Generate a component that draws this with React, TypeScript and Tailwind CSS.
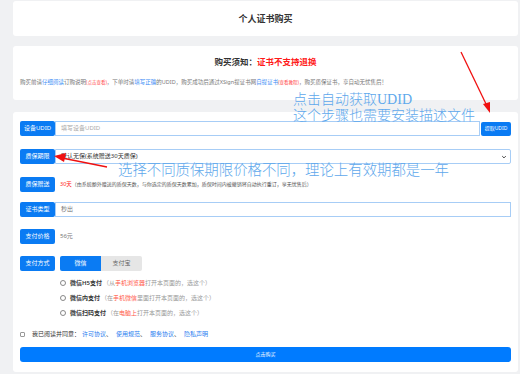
import React from "react"

const font = { fontFamily: '"Noto Sans", "Noto Sans CJK SC", sans-serif' }

function Label({ children }: { children: React.ReactNode }) {
  return (
    <div className="w-[35px] h-[15px] shrink-0 rounded-[2px] bg-[#0a7bf3] text-white text-[6px] flex items-center justify-center">
      {children}
    </div>
  )
}

function Radio({ title, pre, red, post }: { title: string; pre: string; red: string; post: string }) {
  return (
    <div className="flex items-center h-[14px] text-[6px]">
      <span className="w-[6px] h-[6px] rounded-full border border-[#888] bg-white mr-[4px]" />
      <span className="text-[#333] font-semibold">{title}</span>
      <span className="text-[#999] ml-[1px]">
        （{pre}
        <span className="text-[#ff5a4a]">{red}</span>
        {post}）
      </span>
    </div>
  )
}

export default function App() {
  return (
    <div className="relative w-[520px] h-[374px] overflow-hidden bg-[#f0f1f3] pl-[13px] pr-[2px] pt-[1px]" style={font}>
      {/* title card */}
      <div className="h-[35px] bg-white rounded-[3px] flex items-center justify-center">
        <span className="text-[9px] font-bold text-[#333]">个人证书购买</span>
      </div>

      {/* notice card */}
      <div className="mt-[10px] h-[54px] bg-white rounded-[3px] px-[7px] pt-[10px]">
        <div className="text-center text-[8.5px] font-bold text-[#333] leading-[12px]">
          购买须知：<span className="text-[#ff1a1a]">证书不支持退换</span>
        </div>
        <div className="mt-[10px] text-[5.5px] text-[#777] whitespace-nowrap leading-[8px]">
          购买前请<span className="text-[#3b8cf5]">仔细阅读</span>订购说明
          <span className="text-[#ff4a4a] text-[4.5px]">(点击查看)</span>，下单时请
          <span className="text-[#3b8cf5]">填写正确</span>的UDID，购买成功后通过XSign提证书网
          <span className="text-[#3b8cf5]">自提证书</span>
          <span className="text-[#ff4a4a] text-[4.5px]">(查看教程)</span>，购买质保证书，享自动无忧售后！
        </div>
      </div>

      {/* form card */}
      <div className="mt-[12px] h-[260px] bg-white rounded-[3px] px-[7px] pt-[9px]">
        <div className="flex flex-col gap-[12px]">
          {/* UDID */}
          <div className="flex items-center h-[15px]">
            <Label>设备UDID</Label>
            <div className="flex-1 h-[15px] border border-[#a7cdf6] flex items-center pl-[5px] text-[6px] text-[#aaa]">
              填写设备UDID
            </div>
            <div className="ml-[1px] w-[30px] h-[14px] rounded-[2px] bg-[#0a7bf3] text-white text-[5px] flex items-center justify-center">
              提取UDID
            </div>
          </div>

          {/* warranty select */}
          <div className="flex items-center h-[15px] mt-[1px]">
            <Label>质保期限</Label>
            <div className="flex-1 h-[15px] border border-[#a7cdf6] rounded-r-[2px] flex items-center justify-between pl-[5px] pr-[3px] text-[6px] text-[#333]">
              <span>默认无保(系统赠送30天质保)</span>
              <svg width="6" height="6" viewBox="0 0 10 10">
                <path d="M2 3.5 L5 6.5 L8 3.5" fill="none" stroke="#333" strokeWidth="1.5" />
              </svg>
            </div>
          </div>

          {/* bonus */}
          <div className="flex items-center h-[15px] mt-[1px]">
            <Label>质保赠送</Label>
            <span className="ml-[5px] text-[5.5px] text-[#ff2020]">30天</span>
            <span className="text-[5px] text-[#555]">
              （由系统额外赠送的质保天数，与你选定的质保天数累加，质保时间内被撤销将自动执行重订，享无忧售后）
            </span>
          </div>

          {/* type */}
          <div className="flex items-center h-[15px] -mt-[2px]">
            <Label>证书类型</Label>
            <div className="flex-1 h-[15px] border border-[#a7cdf6] flex items-center pl-[5px] text-[6px] text-[#777]">
              秒出
            </div>
          </div>

          {/* price */}
          <div className="flex items-center h-[15px]">
            <Label>支付价格</Label>
            <span className="ml-[5px] text-[6px] text-[#777]">56元</span>
          </div>

          {/* pay method */}
          <div className="flex items-center h-[15px]">
            <Label>支付方式</Label>
            <div className="ml-[5px] flex">
              <div className="w-[41px] h-[15px] rounded-l-[2px] bg-[#0a7bf3] text-white text-[6px] flex items-center justify-center">微信</div>
              <div className="w-[41px] h-[15px] rounded-r-[2px] bg-[#e6e6e6] text-[#666] text-[6px] flex items-center justify-center">支付宝</div>
            </div>
          </div>
        </div>

        {/* radios */}
        <div className="mt-[5px] pl-[40px] flex flex-col gap-[1px]">
          <Radio title="微信H5支付" pre="从" red="手机浏览器" post="打开本页面的，选这个" />
          <Radio title="微信内支付" pre="在" red="手机微信" post="里面打开本页面的，选这个" />
          <Radio title="微信扫码支付" pre="在" red="电脑上" post="打开本页面的，选这个" />
        </div>

        {/* agree */}
        <div className="mt-[9px] flex items-center h-[10px] text-[6px]">
          <span className="w-[5px] h-[5px] border border-[#999] rounded-[1px] bg-white mr-[7px]" />
          <span className="text-[#333] mr-[2px]">我已阅读并同意：</span>
          <span className="text-[#2a7df0]">许可协议</span>
          <span className="text-[#333] mr-[4px]">、</span>
          <span className="text-[#2a7df0]">使用规范</span>
          <span className="text-[#333] mr-[4px]">、</span>
          <span className="text-[#2a7df0]">服务协议</span>
          <span className="text-[#333] mr-[4px]">、</span>
          <span className="text-[#2a7df0]">隐私声明</span>
        </div>

        <div className="mt-[8px] h-[15px] rounded-[3px] bg-[#007bff] text-white text-[5px] flex items-center justify-center">
          点击购买
        </div>
      </div>

      {/* annotations */}
      <div
        className="absolute left-[293px] top-[92px] text-[14px] leading-[16px] text-[#5ea8ec] font-light"
        style={{ fontFamily: '"Liberation Serif", "Noto Sans CJK SC", serif' }}
      >
        <div>点击自动获取UDID</div>
        <div>这个步骤也需要安装描述文件</div>
      </div>
      <div
        className="absolute left-[118px] top-[161px] text-[14.4px] leading-[18px] text-[#5ea8ec] font-light whitespace-nowrap"
        style={{ fontFamily: '"Liberation Serif", "Noto Sans CJK SC", serif' }}
      >
        选择不同质保期限价格不同，理论上有效期都是一年
      </div>

      <svg className="absolute left-0 top-0 pointer-events-none" width="520" height="374">
        <line x1="461" y1="52" x2="487" y2="106" stroke="#f01010" strokeWidth="1.3" />
        <polygon points="490,113 483,104 490,102" fill="#f01010" />
        <line x1="107" y1="167" x2="62" y2="158" stroke="#f01010" strokeWidth="1.3" />
        <polygon points="54,156 66,153 64,162" fill="#f01010" />
      </svg>
    </div>
  )
}
